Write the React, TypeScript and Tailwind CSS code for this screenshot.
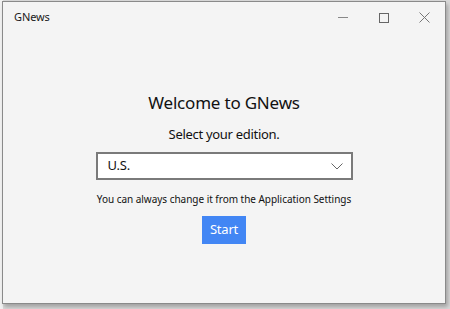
import React from "react";

export default function App() {
  const font = { fontFamily: '"Segoe UI", "Noto Sans", "Open Sans", sans-serif' };
  return (
    <div className="w-[450px] h-[309px] bg-[#d9d9d9] relative overflow-hidden" style={font}>
      <div className="absolute left-0 top-0 w-[3px] h-[309px] bg-[#f2f2f2]" />
      <div className="absolute left-[2px] top-[1px] w-[444px] h-[303px] border border-[#8a8a8a] bg-[#f4f4f4] flex flex-col shadow-[2px_3px_4px_rgba(0,0,0,0.25)]">
        <div className="h-[31px] flex items-center justify-between pl-[11px]">
          <span className="text-[11px] tracking-[-0.1px] text-[#1a1a1a]">GNews</span>
          <div className="flex h-full">
            <div className="w-[41px] flex items-center justify-center">
              <div className="w-[10px] h-px bg-[#888]" />
            </div>
            <div className="w-[41px] flex items-center justify-center">
              <div className="w-[10px] h-[10px] border border-[#666]" />
            </div>
            <div className="w-[41px] flex items-center justify-center">
              <svg width="11" height="11" viewBox="0 0 11 11">
                <path d="M0.5 0.5 L10.5 10.5 M10.5 0.5 L0.5 10.5" stroke="#777" strokeWidth="1" />
              </svg>
            </div>
          </div>
        </div>
        <div className="flex flex-col items-center pt-[58px]">
          <div className="text-[17px] leading-[24px] tracking-[-0.2px] text-[#111]">Welcome to GNews</div>
          <div className="text-[13px] leading-[20px] tracking-[-0.3px] text-[#111] mt-[9px]">Select your edition.</div>
          <div className="mt-[8px] w-[257px] h-[28px] border-2 border-[#7a7a7a] bg-white flex items-center justify-between pl-[10px] pr-[8px]">
            <span className="text-[13px] tracking-[-0.2px] text-[#111]">U.S.</span>
            <svg width="12" height="7" viewBox="0 0 12 7">
              <path d="M0.5 0.5 L6 6 L11.5 0.5" stroke="#666" strokeWidth="1" fill="none" />
            </svg>
          </div>
          <div className="mt-[12px] text-[10px] leading-[14px] tracking-[-0.03px] text-[#111]">You can always change it from the Application Settings</div>
          <div className="mt-[10px] w-[44px] h-[28px] bg-[#4286f4] flex items-center justify-center text-white text-[13px] tracking-[-0.2px]">Start</div>
        </div>
      </div>
    </div>
  );
}
